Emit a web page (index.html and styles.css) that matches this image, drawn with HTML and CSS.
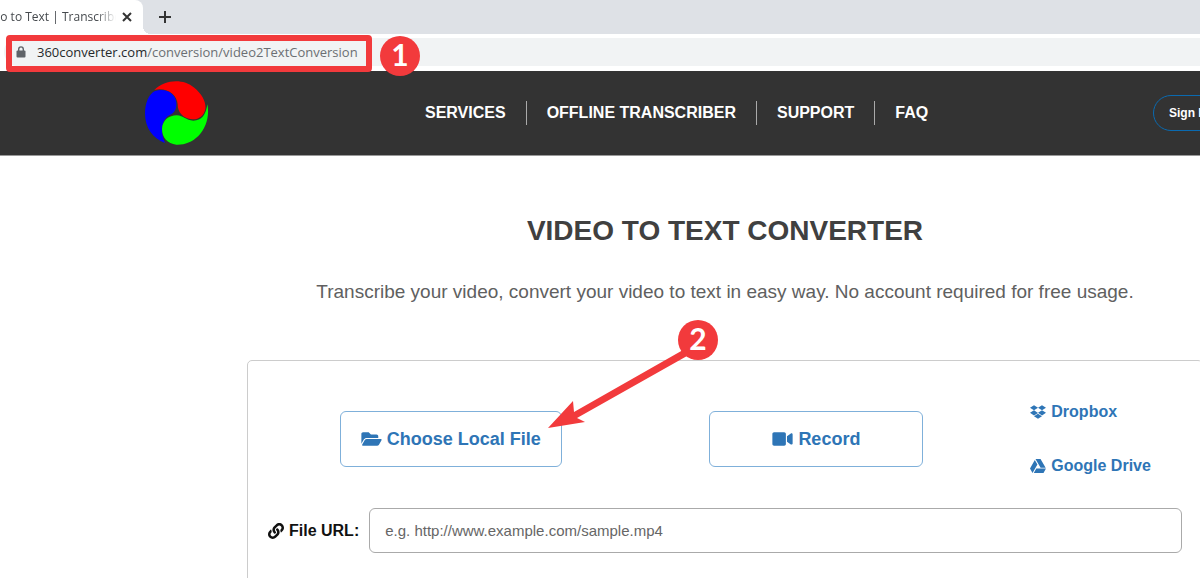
FILE: index.html
```html
<!DOCTYPE html>
<html lang="en">
<head>
  <meta charset="UTF-8" />
  <meta name="viewport" content="width=device-width, initial-scale=1.0"/>
  <title>Video to Text | Transcribe</title>
  <link rel="stylesheet" href="styles.css">
</head>
<body>
  <!-- Browser window -->
  <div class="tab-strip">
    <div class="tab">
      <span class="tab-title">Video to Text | Transcribe</span>
      <button class="tab-button" aria-label="Close tab">
        <svg width="10" height="10" viewBox="0 0 10 10"><path d="M1 1l8 8M9 1l-8 8"/></svg>
      </button>
    </div>
    <button class="tab-button new-tab" aria-label="New tab">
      <svg width="12" height="12" viewBox="0 0 12 12"><path d="M6 0v12M0 6h12"/></svg>
    </button>
  </div>
  <div class="toolbar">
    <div class="address">
      <svg class="lock" width="10" height="12" viewBox="0 0 10 12">
        <rect x="0.5" y="4.5" width="9" height="7" rx="1"/>
        <path d="M2.7 5V3.2a2.3 2.3 0 0 1 4.6 0V5"/>
      </svg>
      <span class="url"><b>360converter.com</b>/conversion/video2TextConversion</span>
    </div>
  </div>

  <header class="site-header">
    <a href="#" class="logo" aria-label="360converter">
      <svg width="64" height="64" viewBox="0 0 192 192">
        <path fill="#f00" d="M28 27C58-3 112-10 148 20C172 40 184 64 181 84C177 105 160 116 142 115C115 113 98 95 98 70C96 40 64 18 28 27Z"/>
        <path fill="#00f" d="M60 186C24 172 0 140 0 98C0 66 12 38 30 30C64 20 92 38 94 66C95 84 88 96 74 102C50 114 44 150 60 186Z"/>
        <path fill="#0f0" d="M187 70C194 104 184 140 160 165C140 184 118 192 94 191C68 188 51 170 51 144C52 118 72 103 95 103C116 104 122 118 145 119C170 119 183 102 187 70Z"/>
      </svg>
    </a>
    <nav class="site-nav">
      <a href="#">SERVICES</a>
      <a href="#">OFFLINE TRANSCRIBER</a>
      <a href="#">SUPPORT</a>
      <a href="#">FAQ</a>
    </nav>
    <button class="sign-in">Sign In</button>
  </header>

  <main>
    <h1>VIDEO TO TEXT CONVERTER</h1>
    <p class="lead">Transcribe your video, convert your video to text in easy way. No account required for free usage.</p>

    <form class="panel">
      <div class="sources">
        <button type="button" class="source-button">
          <svg width="21" height="18" viewBox="0 0 576 512"><path d="M572.694 292.093L500.27 416.248A63.997 63.997 0 0 1 444.989 448H45.025c-18.523 0-30.064-20.093-20.731-36.093l72.424-124.155A64 64 0 0 1 152 256h399.964c18.523 0 30.064 20.093 20.73 36.093zM152 224h328v-48c0-26.51-21.49-48-48-48H272l-64-64H48C21.49 64 0 85.49 0 112v278.046l69.077-118.418C86.214 242.25 117.989 224 152 224z"/></svg>
          Choose Local File
        </button>
        <button type="button" class="source-button record">
          <svg width="21" height="18" viewBox="0 0 576 512"><path d="M336.2 64H47.8C21.4 64 0 85.4 0 111.8v288.4C0 426.6 21.4 448 47.8 448h288.4c26.4 0 47.8-21.4 47.8-47.8V111.8c0-26.4-21.4-47.8-47.8-47.8zm189.4 37.7L416 177.3v157.4l109.6 75.5c21.2 14.6 50.4-.3 50.4-25.8V127.5c0-25.4-29.1-40.4-50.4-25.8z"/></svg>
          Record
        </button>
        <div class="cloud-links">
          <a href="#">
            <svg width="16" height="16" viewBox="0 0 528 512"><path d="M264.4 116.3l-132 84.3 132 84.3-132 84.3L0 284.1l132.3-84.3L0 116.3 132.3 32l132.1 84.3zM131.6 395.7l132-84.3 132 84.3-132 84.3-132-84.3zm132.8-111.6l132-84.3-132-83.6L395.7 32 528 116.3l-132.3 84.3L528 284.8l-132.3 84.3-131.3-85z"/></svg>
            Dropbox
          </a>
          <a href="#">
            <svg width="16" height="16" viewBox="0 0 512 512"><path d="M339 314.9L175.4 32h161.2l163.6 282.9H339zm-137.5 23.6L120.9 480h310.5L512 338.5H201.5zM154.1 67.4L0 338.5 80.6 480 237 208.8 154.1 67.4z"/></svg>
            Google Drive
          </a>
        </div>
      </div>
      <div class="url-row">
        <label for="file-url">
          <svg width="16" height="16" viewBox="0 0 512 512"><path d="M326.612 185.391c59.747 59.809 58.927 155.698.36 214.59-.11.12-.24.25-.36.37l-67.2 67.2c-59.27 59.27-155.699 59.262-214.96 0-59.27-59.26-59.27-155.7 0-214.96l37.106-37.106c9.84-9.84 26.786-3.3 27.294 10.606.648 17.722 3.826 35.527 9.69 52.721 1.986 5.822.567 12.262-3.783 16.612l-13.087 13.087c-28.026 28.026-28.905 73.66-1.155 101.96 28.024 28.579 74.086 28.749 102.325.51l67.2-67.19c28.191-28.191 28.073-73.757 0-101.83-3.701-3.694-7.429-6.564-10.341-8.569a16.037 16.037 0 0 1-6.947-12.606c-.396-10.567 3.348-21.456 11.698-29.806l21.054-21.055c5.521-5.521 14.182-6.199 20.584-1.731a152.482 152.482 0 0 1 20.522 17.197zM467.547 44.449c-59.261-59.262-155.69-59.27-214.96 0l-67.2 67.2c-.12.12-.25.25-.36.37-58.566 58.892-59.387 154.781.36 214.59a152.454 152.454 0 0 0 20.521 17.196c6.402 4.468 15.064 3.789 20.584-1.731l21.054-21.055c8.35-8.35 12.094-19.239 11.698-29.806a16.037 16.037 0 0 0-6.947-12.606c-2.912-2.005-6.64-4.875-10.341-8.569-28.073-28.073-28.191-73.639 0-101.83l67.2-67.19c28.239-28.239 74.3-28.069 102.325.51 27.75 28.3 26.872 73.934-1.155 101.96l-13.087 13.087c-4.35 4.35-5.769 10.79-3.783 16.612 5.864 17.194 9.042 34.999 9.69 52.721.509 13.906 17.454 20.446 27.294 10.606l37.106-37.106c59.271-59.259 59.271-155.699.001-214.959z"/></svg>
          File URL:
        </label>
        <input type="text" id="file-url" placeholder="e.g. http://www.example.com/sample.mp4">
      </div>
    </form>
  </main>

  <!-- Step markers over the page -->
  <div class="mark-box"></div>
  <svg class="mark-arrow" width="140" height="80" viewBox="0 0 140 80">
    <path d="M0 78L25 51L26 62L135 0L139 6L29 68L37 72Z"/>
  </svg>
  <span class="mark step-1">1</span>
  <span class="mark step-2">2</span>
</body>
</html>
```
FILE: styles.css
```css
:root {
  --link: #2e75b6;
  --link-border: #7fb0da;
  --dark: #333;
  --mark: #f23a3c;
}

* {
  box-sizing: border-box;
}

body {
  position: relative;
  margin: 0;
  font-family: "Liberation Sans", Arial, sans-serif;
  background-color: #fff;
  color: #111;
  overflow: hidden;
}

button {
  font-family: inherit;
  cursor: pointer;
}

a {
  text-decoration: none;
}

svg {
  flex: none;
  fill: currentColor;
}

/* Browser window */
.tab-strip {
  display: flex;
  height: 34px;
  background-color: #dee1e6;
  font-family: "Open Sans", "Noto Sans", sans-serif;
}

.tab {
  position: relative;
  display: flex;
  align-items: center;
  gap: 6px;
  width: 143px;
  padding-right: 11px;
  background-color: #fff;
  border-radius: 0 8px 0 0;
}

.tab::after {
  content: "";
  position: absolute;
  left: 100%;
  bottom: 0;
  width: 8px;
  height: 8px;
  background: radial-gradient(circle at 100% 0, transparent 8px, #fff 8px);
}

/* The tab starts left of the window edge */
.tab-title {
  flex: 1;
  min-width: 0;
  margin-left: -24px;
  overflow: hidden;
  font-size: 12px;
  line-height: 20px;
  white-space: nowrap;
  color: #45494d;
  -webkit-mask-image: linear-gradient(to left, transparent, #000 20px);
  mask-image: linear-gradient(to left, transparent, #000 20px);
}

.tab-button {
  display: flex;
  align-items: center;
  padding: 0;
  border: 0;
  background: none;
  color: #333;
}

.tab-button path {
  fill: none;
  stroke: currentColor;
  stroke-width: 2;
}

.new-tab {
  margin-left: 16px;
}

.toolbar {
  padding: 4px 0 5px 4px;
  background-color: #fff;
}

.address {
  display: flex;
  align-items: center;
  gap: 11px;
  height: 28px;
  padding-left: 12px;
  background-color: #f1f3f4;
  border-radius: 14px 0 0 14px;
}

.lock {
  color: #5f6368;
}

.lock path {
  fill: none;
  stroke: currentColor;
  stroke-width: 1.4;
}

.url {
  font-family: "Open Sans", "Noto Sans", sans-serif;
  font-size: 13px;
  color: #6b6f73;
}

.url b {
  font-weight: normal;
  color: #25282b;
}

/* Site header */
.site-header {
  display: flex;
  align-items: center;
  height: 85px;
  padding-left: 145px;
  background-color: var(--dark);
  border-bottom: 1px solid #999;
}

.logo {
  display: flex;
}

.site-nav {
  display: flex;
  margin-left: 196px;
}

.site-nav a {
  padding: 0 20px;
  font-size: 16px;
  font-weight: bold;
  line-height: 24px;
  color: #fff;
}

.site-nav a + a {
  border-left: 1px solid #aaa;
}

.sign-in {
  flex: none;
  height: 36px;
  margin: 0 -26px 0 auto;
  padding: 0 16px 0 15px;
  border: 1px solid #0a6ab0;
  border-radius: 18px;
  background: none;
  font-size: 12px;
  font-weight: bold;
  color: #fff;
}

/* Converter */
main {
  margin: 0 -3px 0 247px;
  padding-top: 55px;
  text-align: center;
}

h1 {
  margin: 0 0 26px;
  font-size: 28px;
  line-height: 40px;
  color: #404040;
}

.lead {
  margin: 0 0 53px;
  font-size: 19px;
  line-height: 30px;
  color: #606060;
}

.panel {
  padding: 39px 20px;
  border: 1px solid #ccc;
  border-radius: 5px;
}

.sources {
  display: grid;
  grid-template-columns: 2fr 2fr 1fr;
  align-items: center;
  justify-items: center;
  margin-bottom: 30px;
}

.source-button {
  display: flex;
  align-items: center;
  justify-content: center;
  gap: 5px;
  height: 56px;
  padding: 0 20px;
  border: 1px solid var(--link-border);
  border-radius: 6px;
  background-color: #fff;
  font-size: 18px;
  font-weight: bold;
  color: var(--link);
}

.record {
  width: 214px;
}

.cloud-links {
  display: flex;
  flex-direction: column;
  gap: 30px;
}

.cloud-links a,
.url-row label {
  display: flex;
  align-items: center;
  gap: 5px;
  font-size: 16px;
  font-weight: bold;
  line-height: 24px;
}

.cloud-links a {
  color: var(--link);
}

.url-row {
  display: flex;
  align-items: center;
  gap: 10px;
}

.url-row input {
  flex: 1;
  height: 45px;
  padding: 0 15px;
  border: 1px solid #aaa;
  border-radius: 6px;
  font-family: inherit;
  font-size: 15px;
}

.url-row input::placeholder {
  color: #666;
}

/* Step markers */
.mark-box {
  position: absolute;
  left: 6px;
  top: 35px;
  width: 366px;
  height: 37px;
  border: 6px solid var(--mark);
  border-radius: 4px;
}

.mark-arrow {
  position: absolute;
  left: 548px;
  top: 350px;
  color: var(--mark);
}

.mark {
  position: absolute;
  width: 40px;
  height: 40px;
  border-radius: 50%;
  background-color: var(--mark);
  font-family: Lato, sans-serif;
  font-size: 30px;
  font-weight: bold;
  line-height: 36px;
  text-align: center;
  color: #fff;
}

.step-1 {
  left: 380px;
  top: 36px;
}

.step-2 {
  left: 678px;
  top: 320px;
}
```
